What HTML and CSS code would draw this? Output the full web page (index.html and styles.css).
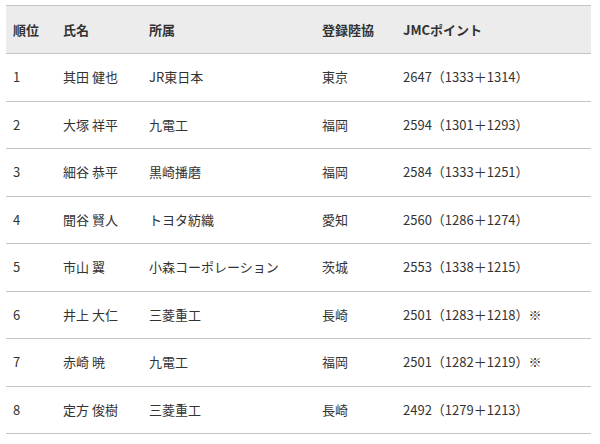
FILE: index.html
```html
<!DOCTYPE html>
<html lang="ja">
<head>
<meta charset="utf-8">
<link rel="stylesheet" href="styles.css">
</head>
<body>
<table class="rank">
  <colgroup>
    <col class="c1"><col class="c2"><col class="c3"><col class="c4"><col class="c5">
  </colgroup>
  <thead>
    <tr><th>順位</th><th>氏名</th><th>所属</th><th>登録陸協</th><th>JMCポイント</th></tr>
  </thead>
  <tbody>
    <tr><td>1</td><td>其田 健也</td><td>JR東日本</td><td>東京</td><td>2647（1333＋1314）</td></tr>
    <tr><td>2</td><td>大塚 祥平</td><td>九電工</td><td>福岡</td><td>2594（1301＋1293）</td></tr>
    <tr><td>3</td><td>細谷 恭平</td><td>黒崎播磨</td><td>福岡</td><td>2584（1333＋1251）</td></tr>
    <tr><td>4</td><td>聞谷 賢人</td><td>トヨタ紡織</td><td>愛知</td><td>2560（1286＋1274）</td></tr>
    <tr><td>5</td><td>市山 翼</td><td>小森コーポレーション</td><td>茨城</td><td>2553（1338＋1215）</td></tr>
    <tr><td>6</td><td>井上 大仁</td><td>三菱重工</td><td>長崎</td><td>2501（1283＋1218）※</td></tr>
    <tr><td>7</td><td>赤崎 暁</td><td>九電工</td><td>福岡</td><td>2501（1282＋1219）※</td></tr>
    <tr><td>8</td><td>定方 俊樹</td><td>三菱重工</td><td>長崎</td><td>2492（1279＋1213）</td></tr>
  </tbody>
</table>
</body>
</html>
```
FILE: styles.css
```css
html, body {
  margin: 0;
  padding: 0;
  background: #fff;
}
body {
  padding: 5px 9px 0 6px;
  font-family: "Noto Sans CJK JP", "Noto Sans", sans-serif;
  font-size: 13px;
  color: #333;
}
.rank {
  width: 585px;
  border-collapse: collapse;
  table-layout: fixed;
  border-top: 1px solid #c4c4c4;
}
.c1 { width: 50px; }
.c2 { width: 86px; }
.c3 { width: 173px; }
.c4 { width: 81px; }
.c5 { width: 195px; }
.rank th,
.rank td {
  text-align: left;
  padding: 14px 7px;
  border-bottom: 1px solid #c4c4c4;
  white-space: nowrap;
  vertical-align: middle;
}
.rank th {
  background: #ececec;
  font-weight: bold;
  line-height: 19px;
  color: #333;
}
.rank td {
  line-height: 18.5px;
}
```
